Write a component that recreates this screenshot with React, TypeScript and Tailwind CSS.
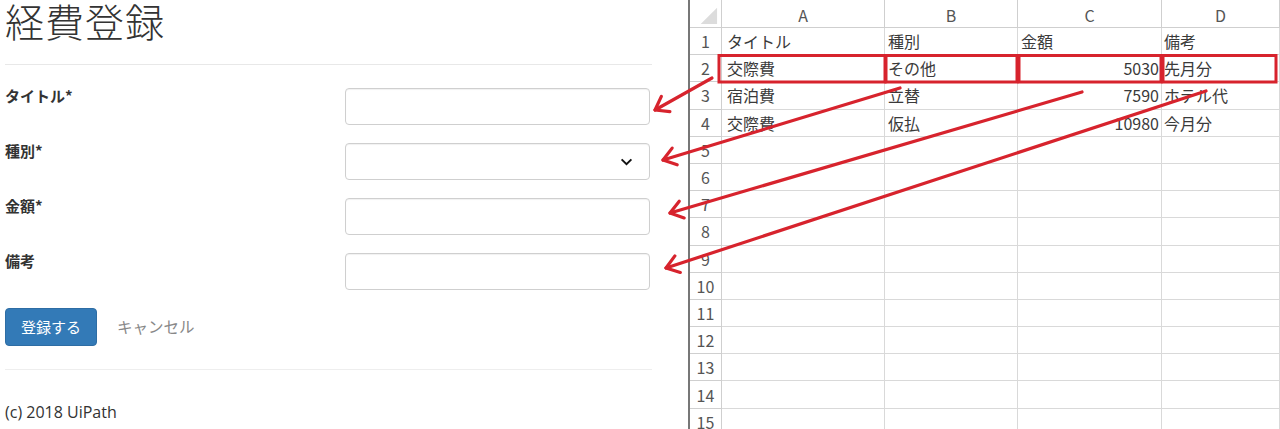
import React from "react";

const jp = { fontFamily: '"Noto Sans CJK JP", "Noto Sans", sans-serif' };

type Row = { title?: string; kind?: string; amount?: string; note?: string };

const rows: Row[] = [
  { title: "タイトル", kind: "種別", amount: "金額", note: "備考" },
  { title: "交際費", kind: "その他", amount: "5030", note: "先月分" },
  { title: "宿泊費", kind: "立替", amount: "7590", note: "ホテル代" },
  { title: "交際費", kind: "仮払", amount: "10980", note: "今月分" },
];

const fields = [
  { label: "タイトル*", select: false },
  { label: "種別*", select: true },
  { label: "金額*", select: false },
  { label: "備考", select: false },
];

// tail -> head, head points at the form input
const arrows = [
  [712, 78, 655, 110],
  [900, 88, 663, 160],
  [1082, 92, 670, 213],
  [1206, 91, 666, 268],
];

function ExpenseForm() {
  return (
    <div className="w-[688px] shrink-0 bg-white pl-[5px]" style={jp}>
      <h1 className="text-[39px] leading-[41px] font-light text-[#333] tracking-[1px]">
        経費登録
      </h1>
      <div className="mt-[23px] w-[647px] border-t border-[#e8e8e8]" />

      <form className="mt-[23px] w-[647px]">
        {fields.map((f) => (
          <div key={f.label} className="mb-[18px] flex items-start">
            <label className="w-[340px] text-[15px] leading-[16px] font-bold text-[#333]">
              {f.label}
            </label>
            <div className="relative h-[37px] w-[305px] rounded-[4px] border border-[#cfcfcf] bg-white shadow-[inset_0_1px_1px_rgba(0,0,0,0.06)]">
              {f.select && (
                <svg
                  viewBox="0 0 14 9"
                  className="absolute right-[16px] top-[14px] h-[8px] w-[13px]"
                >
                  <path
                    d="M1.5 1.5L7 7l5.5-5.5"
                    stroke="#111"
                    strokeWidth="2.2"
                    fill="none"
                  />
                </svg>
              )}
            </div>
          </div>
        ))}

        <div className="mt-[1px] flex items-center">
          <button
            type="button"
            className="h-[38px] w-[92px] rounded-[4px] border border-[#2e6da4] bg-[#337ab7] text-[15px] text-white"
          >
            登録する
          </button>
          <a className="ml-[20px] text-[15.5px] text-[#888]">キャンセル</a>
        </div>
      </form>

      <div className="mt-[23px] w-[647px] border-t border-[#eeeeee]" />
      <p
        className="mt-[32px] text-[16px] leading-[20px] text-[#333]"
        style={{ fontFamily: '"Open Sans", "Noto Sans", sans-serif' }}
      >
        (c) 2018 UiPath
      </p>
    </div>
  );
}

function Sheet() {
  const cell = "border-r border-b border-[#d9d9d9] text-[16px] leading-none text-[#3a3a3a]";
  const num = "border-r border-b border-[#cfcfcf] flex items-center justify-center text-[16px] text-[#555]";
  return (
    <div
      className="flex-1 border-l-2 border-[#777] bg-white grid grid-cols-[32px_163px_133px_144px_1fr] grid-rows-[28px_repeat(15,27.2px)]"
      style={jp}
    >
      <div className="relative border-r border-b border-[#cfcfcf]">
        <svg viewBox="0 0 32 28" className="absolute inset-0 h-full w-full">
          <path d="M28 8V25H11Z" fill="#dcdcdc" />
        </svg>
      </div>
      {["A", "B", "C", "D"].map((c) => (
        <div key={c} className={`${num} pt-[2px]`}>
          {c}
        </div>
      ))}

      {Array.from({ length: 15 }, (_, i) => {
        const r = rows[i] ?? {};
        const numeric = r.amount !== undefined && /^\d+$/.test(r.amount);
        return (
          <React.Fragment key={i}>
            <div className={num}>{i + 1}</div>
            <div className={`${cell} flex items-center pl-[5px]`}>{r.title}</div>
            <div className={`${cell} flex items-center pl-[3px]`}>{r.kind}</div>
            <div
              className={
                numeric
                  ? `${cell} flex items-center justify-end pr-[2px]`
                  : `${cell} flex items-center pl-[3px]`
              }
            >
              {r.amount}
            </div>
            <div className={`${cell} flex items-center pl-[2px]`}>{r.note}</div>
          </React.Fragment>
        );
      })}
    </div>
  );
}

function Annotations() {
  const red = "#d7232d";
  return (
    <svg
      className="pointer-events-none absolute inset-0"
      width="1280"
      height="429"
      viewBox="0 0 1280 429"
    >
      <g stroke={red} strokeWidth="3" fill="none">
        <rect x="719" y="55.5" width="166" height="26.5" />
        <rect x="886" y="55.5" width="131" height="26.5" />
        <rect x="1019" y="55.5" width="142" height="26.5" />
        <rect x="1163" y="55.5" width="113" height="26.5" />
      </g>
      <g stroke={red} strokeWidth="3.2" fill="none" strokeLinecap="round" strokeLinejoin="round">
        {arrows.map(([x1, y1, x2, y2], i) => {
          const a = Math.atan2(y2 - y1, x2 - x1);
          const L = 15;
          const s = 0.62;
          const p1 = [x2 - L * Math.cos(a - s), y2 - L * Math.sin(a - s)];
          const p2 = [x2 - L * Math.cos(a + s), y2 - L * Math.sin(a + s)];
          return (
            <g key={i}>
              <line x1={x1} y1={y1} x2={x2} y2={y2} />
              <polyline points={`${p1[0]},${p1[1]} ${x2},${y2} ${p2[0]},${p2[1]}`} />
            </g>
          );
        })}
      </g>
    </svg>
  );
}

export default function App() {
  return (
    <div className="relative flex h-[429px] w-[1280px] overflow-hidden bg-white">
      <ExpenseForm />
      <Sheet />
      <Annotations />
    </div>
  );
}
